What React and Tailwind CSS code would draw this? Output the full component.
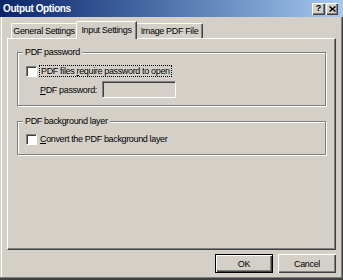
import React from "react";

const F = "font-['Liberation_Sans',Arial,sans-serif]";

function Checkbox() {
  return (
    <div className="w-[11px] h-[11px] bg-white border-t border-l border-t-[#808080] border-l-[#808080] border-b border-r border-b-white border-r-white shadow-[inset_1px_1px_0_#404040] shrink-0" />
  );
}

function Group({ label, children, className = "" }) {
  return (
    <div className={`relative border border-[#808080] shadow-[inset_1px_1px_0_#ffffff,1px_1px_0_#ffffff] ${className}`}>
      <span className="absolute -top-[7px] left-[5px] px-[2px] bg-[#d4d0c8] leading-[12px] text-black whitespace-nowrap">
        {label}
      </span>
      {children}
    </div>
  );
}

function Btn({ children, def }) {
  return (
    <div
      className={`w-[58px] h-[19px] flex items-center justify-center bg-[#d4d0c8] text-black leading-[12px] whitespace-nowrap ${
        def
          ? "border border-black shadow-[inset_1px_1px_0_#ffffff,inset_-1px_-1px_0_#404040,inset_-2px_-2px_0_#808080]"
          : "shadow-[inset_1px_1px_0_#ffffff,inset_-1px_-1px_0_#404040,inset_-2px_-2px_0_#808080]"
      }`}
    >
      {children}
    </div>
  );
}

export default function App() {
  return (
    <div
      className={`${F} text-[9px] tracking-[-0.35px] text-black w-[343px] h-[280px] bg-[#d4d0c8] flex flex-col overflow-hidden shadow-[inset_-1px_-2px_0_#404040,inset_-2px_-3px_0_#808080,inset_1px_0_0_#d4d0c8,inset_2px_0_0_#ffffff]`}
    >
      {/* Title bar */}
      <div className="h-[17px] shrink-0 bg-linear-to-r from-[#0a246a] to-[#a6caf0] flex items-center justify-between pl-[3px] pr-[5px]">
        <span className="text-white font-bold text-[10px] tracking-[-0.4px] leading-[13px] whitespace-nowrap">Output Options</span>
        <div className="flex gap-[1px] items-center">
          <div className="w-[13px] h-[12px] bg-[#d4d0c8] shadow-[inset_1px_1px_0_#ffffff,inset_-1px_-1px_0_#404040,inset_-2px_-2px_0_#808080] flex items-center justify-center text-black font-bold text-[9px] leading-[9px] tracking-normal">
            ?
          </div>
          <div className="w-[12px] h-[12px] bg-[#d4d0c8] shadow-[inset_1px_1px_0_#ffffff,inset_-1px_-1px_0_#404040,inset_-2px_-2px_0_#808080] flex items-center justify-center">
            <svg width="7" height="6" viewBox="0 0 7 6">
              <path d="M0.5 0.5 L6.5 5.5 M6.5 0.5 L0.5 5.5" stroke="#000" strokeWidth="1.4" />
            </svg>
          </div>
        </div>
      </div>

      {/* Tabs */}
      <div className="h-[17px] mt-[4px] shrink-0 flex items-end pl-[11px] relative z-10 whitespace-nowrap">
        <div className="w-[67px] h-[15px] flex items-center justify-center border-t border-l border-white rounded-tl-[2px] shadow-[inset_-1px_0_0_#808080] leading-[12px] pr-[2px]">
          General Settings
        </div>
        <div className="w-[61px] h-[18px] -mx-[2px] -mb-[1px] relative z-10 bg-[#d4d0c8] flex items-center justify-center border-t border-l border-white rounded-tl-[2px] border-r border-r-[#404040] shadow-[inset_-1px_0_0_#808080] leading-[12px] pb-[2px]">
          Input Settings
        </div>
        <div className="w-[68px] h-[15px] flex items-center justify-center border-t border-white border-r border-r-[#404040] rounded-tr-[2px] shadow-[inset_-1px_0_0_#808080] leading-[12px] pl-[2px]">
          Image PDF File
        </div>
      </div>

      {/* Panel */}
      <div className="ml-[7px] w-[329px] h-[212px] shrink-0 border-t border-l border-white border-r border-b border-r-[#404040] border-b-[#404040] shadow-[inset_-1px_-1px_0_#808080] px-[9px] pt-[13px] whitespace-nowrap">
        <Group label="PDF password" className="pt-[12px] pb-[7px] pl-[8px]">
          <div className="flex items-center h-[12px]">
            <Checkbox />
            <span className="ml-[2px] px-[1px] border border-dotted border-black leading-[10px]">
              PDF files <span className="underline">r</span>equire password to open
            </span>
          </div>
          <div className="flex items-center mt-[4px] pl-[14px]">
            <span className="w-[62px] leading-[12px]">
              <span className="underline">P</span>DF password:
            </span>
            <div className="w-[74px] h-[17px] bg-[#d4d0c8] border-t border-l border-t-[#808080] border-l-[#808080] border-b border-r border-b-white border-r-white shadow-[inset_1px_1px_0_#404040]" />
          </div>
        </Group>
        <Group label="PDF background layer" className="mt-[15px] pt-[11px] pb-[9px] pl-[8px]">
          <div className="flex items-center h-[12px]">
            <Checkbox />
            <span className="ml-[3px] leading-[12px]">
              <span className="underline">C</span>onvert the PDF background layer
            </span>
          </div>
        </Group>
      </div>

      {/* Buttons */}
      <div className="flex justify-end gap-[5px] pr-[7px] mt-[4px]">
        <Btn def>OK</Btn>
        <Btn>Cancel</Btn>
      </div>
    </div>
  );
}
